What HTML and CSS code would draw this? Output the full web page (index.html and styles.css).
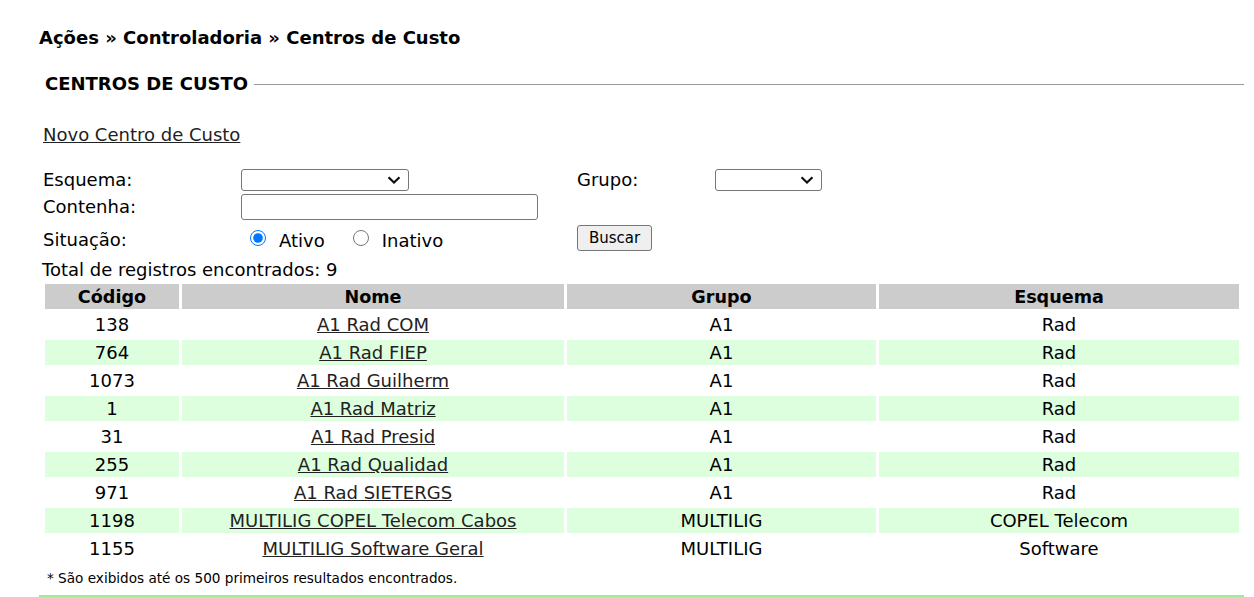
FILE: index.html
```html
<!DOCTYPE html>
<html lang="pt-BR">
<head>
<meta charset="utf-8">
<title>Centros de Custo</title>
<link rel="stylesheet" href="styles.css">
</head>
<body>
<div class="page">
  <h1 class="crumbs">Ações » Controladoria » Centros de Custo</h1>
  <div class="section-title"><span>CENTROS DE CUSTO</span><i class="rule"></i></div>
  <a class="new-link" href="#">Novo Centro de Custo</a>
  <form class="filters">
    <label class="lbl">Esquema:</label>
    <div class="fld"><select class="sel sel-esq"><option></option></select></div>
    <label class="lbl lbl-grupo">Grupo:</label>
    <div class="fld"><select class="sel sel-grp"><option></option></select></div>

    <label class="lbl">Contenha:</label>
    <div class="fld span3"><input class="txt" type="text"></div>

    <label class="lbl lbl-sit">Situação:</label>
    <div class="fld radios">
      <label class="rad"><input type="radio" name="s" checked>Ativo</label>
      <label class="rad"><input type="radio" name="s">Inativo</label>
    </div>
    <div class="fld span2"><button type="button" class="btn">Buscar</button></div>
  </form>
  <div class="total">Total de registros encontrados: 9</div>
  <table class="grid">
    <colgroup><col class="c1"><col class="c2"><col class="c3"><col class="c4"></colgroup>
    <thead><tr><th>Código</th><th>Nome</th><th>Grupo</th><th>Esquema</th></tr></thead>
    <tbody>
      <tr><td>138</td><td><a href="#">A1 Rad COM</a></td><td>A1</td><td>Rad</td></tr>
      <tr class="alt"><td>764</td><td><a href="#">A1 Rad FIEP</a></td><td>A1</td><td>Rad</td></tr>
      <tr><td>1073</td><td><a href="#">A1 Rad Guilherm</a></td><td>A1</td><td>Rad</td></tr>
      <tr class="alt"><td>1</td><td><a href="#">A1 Rad Matriz</a></td><td>A1</td><td>Rad</td></tr>
      <tr><td>31</td><td><a href="#">A1 Rad Presid</a></td><td>A1</td><td>Rad</td></tr>
      <tr class="alt"><td>255</td><td><a href="#">A1 Rad Qualidad</a></td><td>A1</td><td>Rad</td></tr>
      <tr><td>971</td><td><a href="#">A1 Rad SIETERGS</a></td><td>A1</td><td>Rad</td></tr>
      <tr class="alt"><td>1198</td><td><a href="#">MULTILIG COPEL Telecom Cabos</a></td><td>MULTILIG</td><td>COPEL Telecom</td></tr>
      <tr><td>1155</td><td><a href="#">MULTILIG Software Geral</a></td><td>MULTILIG</td><td>Software</td></tr>
    </tbody>
  </table>
  <p class="note">* São exibidos até os 500 primeiros resultados encontrados.</p>
  <div class="bottom-line"></div>
</div>
</body>
</html>
```

FILE: styles.css
```css
html, body { margin: 0; padding: 0; background: #fff; }
body { font-family: "DejaVu Sans", Verdana, sans-serif; color: #000; font-size: 18px; }
.page { padding: 26px 0 0 39px; width: 1206px; }
.crumbs { margin: 0; font-size: 18px; font-weight: bold; line-height: 24px; }
.section-title { display: flex; align-items: center; margin: 22px 0 0 6px; font-weight: bold; font-size: 18px; line-height: 24px; }
.section-title .rule { flex: 1; height: 1px; background: #999; margin-left: 6px; margin-right: 1px; }
.new-link { display: block; width: fit-content; margin: 28px 0 0 4px; color: #222; line-height: 22px; }
.filters { display: grid; grid-template-columns: 198px 336px 138px 300px; grid-template-rows: 24px 30px 32px; margin: 22px 0 0 4px; align-items: center; }
.lbl { line-height: 24px; }
.lbl-sit { padding-top: 4px; }
.fld { display: flex; align-items: center; }
.span3 { grid-column: span 3; }
.span2 { grid-column: span 2; }
.sel {
  -webkit-appearance: none; appearance: none;
  font: 13px "DejaVu Sans", sans-serif; height: 22px; border: 1px solid #767676; border-radius: 3px;
  background: #fff url("data:image/svg+xml,%3Csvg xmlns='http://www.w3.org/2000/svg' width='14' height='8' viewBox='0 0 14 8'%3E%3Cpath d='M1.5 1.2 L7 6.5 L12.5 1.2' fill='none' stroke='%23111' stroke-width='2.2'/%3E%3C/svg%3E") no-repeat right 7px center;
}
.sel-esq { width: 168px; }
.sel-grp { width: 107px; }
.txt { width: 297px; height: 26px; box-sizing: border-box; border: 1px solid #767676; border-radius: 3px; margin: 0; }
.radios { gap: 28px; padding-left: 9px; }
.rad { display: flex; align-items: center; padding-top: 6px; line-height: 24px; }
.rad input { width: 16px; height: 16px; margin: 0 13px 6px 0; accent-color: #0075ff; }
.btn { font: 15px "DejaVu Sans", sans-serif; height: 26px; width: 75px; padding: 0; border: 1px solid #767676; border-radius: 3px; background: #efefef; color: #000; }
.total { margin: 6px 0 0 3px; line-height: 20px; }
.grid { border-collapse: separate; border-spacing: 3px; width: 1200px; margin-left: 3px; margin-top: 1px; table-layout: fixed; }
.c1 { width: 134px; } .c2 { width: 382px; } .c3 { width: 309px; } .c4 { width: 360px; }
.grid th, .grid td { padding: 1px 0 0; height: 24px; text-align: center; line-height: 24px; }
.grid th { background: #cccccc; font-weight: bold; font-size: 17.6px; }
.grid tr.alt td { background: #ddffdd; }
.grid a { color: #222; }
.note { margin: 6px 0 0 8px; font-size: 13.6px; line-height: 16px; }
.bottom-line { height: 2px; background: #99ee99; margin-top: 9px; width: 1205px; }
```
